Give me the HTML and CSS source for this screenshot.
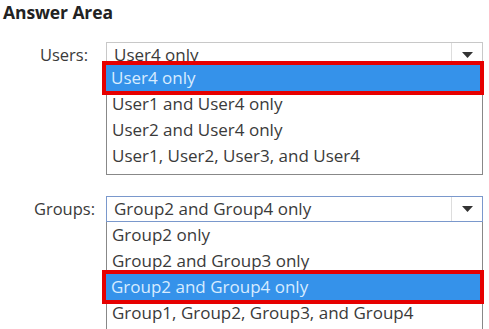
FILE: index.html
```html
<!DOCTYPE html>
<html>
<head>
<meta charset="utf-8">
<link rel="stylesheet" href="styles.css">
</head>
<body>
<div class="page">
  <h1 class="title">Answer Area</h1>
  <div class="field field-users">
    <div class="label label-users">Users:</div>
    <div class="combo">
      <div class="select">
        <span class="value">User4 only</span>
        <span class="btn"><svg width="11" height="6" viewBox="0 0 11 6"><path d="M0 0H11L5.5 6Z" fill="#333"/></svg></span>
      </div>
      <ul class="list list-users">
        <li class="item selected">User4 only</li>
        <li class="item">User1 and User4 only</li>
        <li class="item">User2 and User4 only</li>
        <li class="item">User1, User2, User3, and User4</li>
      </ul>
    </div>
  </div>
  <div class="field field-groups">
    <div class="label label-groups">Groups:</div>
    <div class="combo">
      <div class="select focused">
        <span class="value">Group2 and Group4 only</span>
        <span class="btn"><svg width="11" height="6" viewBox="0 0 11 6"><path d="M0 0H11L5.5 6Z" fill="#333"/></svg></span>
      </div>
      <ul class="list list-groups">
        <li class="item">Group2 only</li>
        <li class="item">Group2 and Group3 only</li>
        <li class="item selected">Group2 and Group4 only</li>
        <li class="item">Group1, Group2, Group3, and Group4</li>
      </ul>
    </div>
  </div>
</div>
</body>
</html>
```
FILE: styles.css
```css
* { box-sizing: border-box; }
html, body { margin: 0; padding: 0; background: #fff; }
body {
  font-family: "Open Sans", "Noto Sans", sans-serif;
  color: #3a3a3a;
  font-size: 17px;
}
.page { width: 489px; height: 329px; overflow: hidden; }
.title {
  margin: 0;
  padding: 0 0 0 3px;
  font-size: 17.5px;
  font-weight: 700;
  line-height: 24px;
  letter-spacing: -0.1px;
  color: #222;
}
.field { display: flex; align-items: flex-start; }
.field-users { margin-top: 18px; }
.field-groups { margin-top: 21px; }
.label {
  width: 106px;
  text-align: right;
  line-height: 26px;
  font-size: 16.5px;
  color: #3a3a3a;
}
.label-users { padding-right: 18px; }
.label-groups { padding-right: 11px; }
.combo { width: 377px; display: flex; flex-direction: column; }
.select {
  height: 26px;
  border: 1px solid #c8c8c8;
  display: flex;
  align-items: center;
  background: #fff;
}
.select.focused { border-color: #7a98cc; }
.value { flex: 1; padding-left: 7px; line-height: 24px; }
.btn {
  width: 31px;
  height: 24px;
  border-left: 1px solid #ddd;
  display: flex;
  align-items: center;
  justify-content: center;
}
.list {
  list-style: none;
  margin: 0;
  padding: 0 0 5px;
  border: 1px solid #888;
  border-top: none;
  background: #fff;
}
.list-users { margin-top: -6px; padding-top: 2px; border-top: 1px solid #888; }
.item {
  height: 26px;
  line-height: 26px;
  padding-left: 5px;
  white-space: nowrap;
}
.item.selected {
  background: #3592ea;
  color: #d8ecff;
  margin: 0 2px 0 -1px;
  outline: 4px solid #e60000;
  position: relative;
}
```
